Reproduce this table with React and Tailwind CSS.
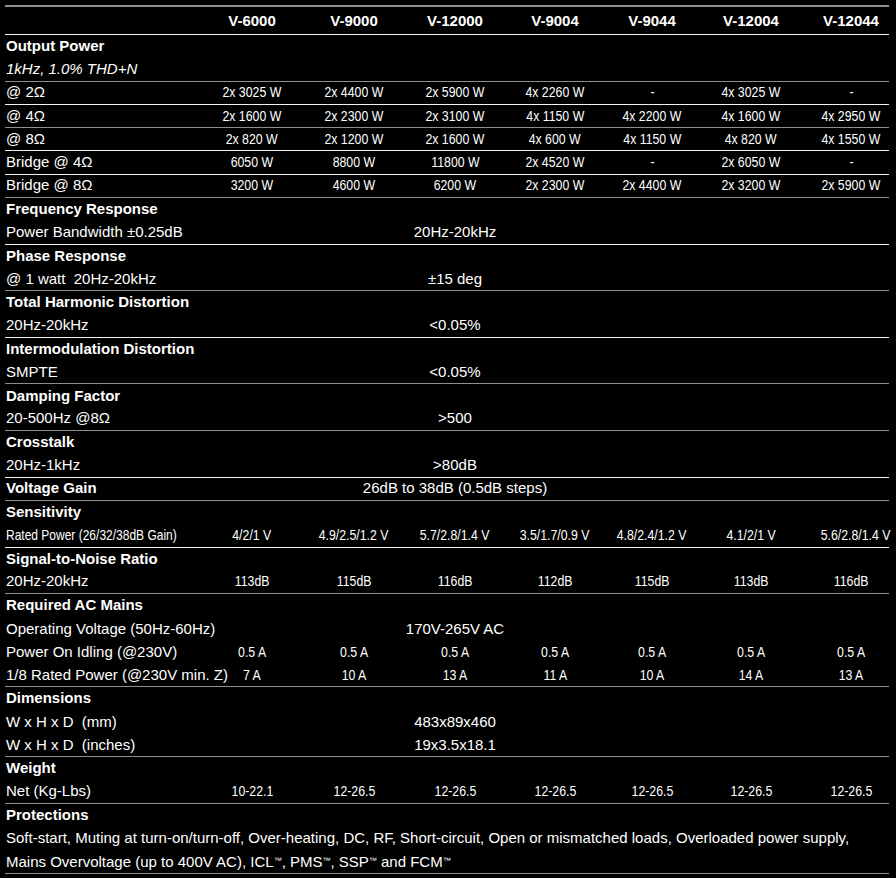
import React from "react";

const COLS = ["V-6000", "V-9000", "V-12000", "V-9004", "V-9044", "V-12004", "V-12044"];

const GRID = "grid grid-cols-[197px_100px_104px_98px_102px_92px_106px_1fr]";
const SANS = { fontFamily: '"Liberation Sans", Arial, sans-serif' };

function lineCls(line) {
  if (line === "white") return "border-b border-[#f2f2f2]";
  if (line === "gray") return "border-b border-[#8f8f8f]";
  return "";
}

function Row({ line, children, className = "" }) {
  return (
    <div className={`${GRID} h-[23.3px] items-center pb-[2px] ${lineCls(line)} ${className}`}>{children}</div>
  );
}

function Label({ children, bold, italic, narrow }) {
  if (narrow) {
    return (
      <div className="pl-[1px] whitespace-pre text-[15px] leading-none text-white">
        <span className="inline-block origin-left scale-x-[0.8]">{children}</span>
      </div>
    );
  }
  return (
    <div
      className={`pl-[1px] whitespace-pre text-[15px] leading-none text-white ${bold ? "font-bold" : ""} ${italic ? "italic" : ""}`}
    >
      {children}
    </div>
  );
}

function Values({ v }) {
  return v.map((x, i) => (
    <div
      key={i}
      className={`flex justify-center whitespace-nowrap text-[15px] leading-none text-white ${i === 6 ? "pl-[9px]" : ""}`}
    >
      <span className="inline-block scale-x-[0.82]">{x}</span>
    </div>
  ));
}

function Span({ children }) {
  return (
    <div className="col-start-4 flex justify-center whitespace-nowrap text-[15px] leading-none text-white">
      {children}
    </div>
  );
}

function Section({ title, children }) {
  return (
    <>
      <Row>
        <Label bold>{title}</Label>
      </Row>
      {children}
    </>
  );
}

export default function App() {
  return (
    <div className="min-h-[878px] bg-black pt-[5px] pl-[5px]" style={SANS}>
      <div className="w-[884px] border-t-2 border-[#8f8f8f]">
        {/* header */}
        <div className={`${GRID} h-[28px] items-center pb-[1px] border-b border-[#f2f2f2]`}>
          <div />
          {COLS.map((c, i) => (
            <div
              key={c}
              className={`flex justify-center text-[15px] font-bold leading-none text-white ${i === 6 ? "pl-[9px]" : ""}`}
            >
              {c}
            </div>
          ))}
        </div>

        <Section title="Output Power">
          <Row line="gray">
            <Label italic>1kHz, 1.0% THD+N</Label>
          </Row>
        </Section>
        <Row line="white">
          <Label>@ 2Ω</Label>
          <Values v={["2x 3025 W", "2x 4400 W", "2x 5900 W", "4x 2260 W", "-", "4x 3025 W", "-"]} />
        </Row>
        <Row line="gray">
          <Label>@ 4Ω</Label>
          <Values v={["2x 1600 W", "2x 2300 W", "2x 3100 W", "4x 1150 W", "4x 2200 W", "4x 1600 W", "4x 2950 W"]} />
        </Row>
        <Row line="white">
          <Label>@ 8Ω</Label>
          <Values v={["2x 820 W", "2x 1200 W", "2x 1600 W", "4x 600 W", "4x 1150 W", "4x 820 W", "4x 1550 W"]} />
        </Row>
        <Row line="white">
          <Label>Bridge @ 4Ω</Label>
          <Values v={["6050 W", "8800 W", "11800 W", "2x 4520 W", "-", "2x 6050 W", "-"]} />
        </Row>
        <Row line="gray">
          <Label>Bridge @ 8Ω</Label>
          <Values v={["3200 W", "4600 W", "6200 W", "2x 2300 W", "2x 4400 W", "2x 3200 W", "2x 5900 W"]} />
        </Row>

        <Section title="Frequency Response">
          <Row line="white">
            <Label>Power Bandwidth ±0.25dB</Label>
            <Span>20Hz-20kHz</Span>
          </Row>
        </Section>
        <Section title="Phase Response">
          <Row line="gray">
            <Label>{"@ 1 watt  20Hz-20kHz"}</Label>
            <Span>±15 deg</Span>
          </Row>
        </Section>
        <Section title="Total Harmonic Distortion">
          <Row line="white">
            <Label>20Hz-20kHz</Label>
            <Span>&lt;0.05%</Span>
          </Row>
        </Section>
        <Section title="Intermodulation Distortion">
          <Row line="gray">
            <Label>SMPTE</Label>
            <Span>&lt;0.05%</Span>
          </Row>
        </Section>
        <Section title="Damping Factor">
          <Row line="gray">
            <Label>20-500Hz @8Ω</Label>
            <Span>&gt;500</Span>
          </Row>
        </Section>
        <Section title="Crosstalk">
          <Row line="white">
            <Label>20Hz-1kHz</Label>
            <Span>&gt;80dB</Span>
          </Row>
        </Section>
        <Row line="gray">
          <Label bold>Voltage Gain</Label>
          <Span>26dB to 38dB (0.5dB steps)</Span>
        </Row>
        <Section title="Sensitivity">
          <Row line="white">
            <Label narrow>Rated Power (26/32/38dB Gain)</Label>
            <Values v={["4/2/1 V", "4.9/2.5/1.2 V", "5.7/2.8/1.4 V", "3.5/1.7/0.9 V", "4.8/2.4/1.2 V", "4.1/2/1 V", "5.6/2.8/1.4 V"]} />
          </Row>
        </Section>
        <Section title="Signal-to-Noise Ratio">
          <Row line="gray">
            <Label>20Hz-20kHz</Label>
            <Values v={["113dB", "115dB", "116dB", "112dB", "115dB", "113dB", "116dB"]} />
          </Row>
        </Section>
        <Section title="Required AC Mains">
          <Row>
            <Label>Operating Voltage (50Hz-60Hz)</Label>
            <Span>170V-265V AC</Span>
          </Row>
          <Row>
            <Label>Power On Idling (@230V)</Label>
            <Values v={["0.5 A", "0.5 A", "0.5 A", "0.5 A", "0.5 A", "0.5 A", "0.5 A"]} />
          </Row>
          <Row line="gray">
            <Label>1/8 Rated Power (@230V min. Z)</Label>
            <Values v={["7 A", "10 A", "13 A", "11 A", "10 A", "14 A", "13 A"]} />
          </Row>
        </Section>
        <Section title="Dimensions">
          <Row>
            <Label>{"W x H x D  (mm)"}</Label>
            <Span>483x89x460</Span>
          </Row>
          <Row line="gray">
            <Label>{"W x H x D  (inches)"}</Label>
            <Span>19x3.5x18.1</Span>
          </Row>
        </Section>
        <Section title="Weight">
          <Row line="gray">
            <Label>Net (Kg-Lbs)</Label>
            <Values v={["10-22.1", "12-26.5", "12-26.5", "12-26.5", "12-26.5", "12-26.5", "12-26.5"]} />
          </Row>
        </Section>
        <Section title="Protections">
          <div className="border-b border-[#8f8f8f]">
            <div className="flex h-[23.3px] items-center pb-[2px] pl-[1px] text-[15px] leading-none text-white whitespace-nowrap">
              Soft-start, Muting at turn-on/turn-off, Over-heating, DC, RF, Short-circuit, Open or mismatched loads, Overloaded power supply,
            </div>
            <div className="flex h-[22.3px] items-center pb-[1px] pl-[1px] text-[15px] leading-none text-white whitespace-nowrap">
              <span>
                Mains Overvoltage (up to 400V AC), ICL<sup className="text-[8px]">™</sup>, PMS<sup className="text-[8px]">™</sup>, SSP
                <sup className="text-[8px]">™</sup> and FCM<sup className="text-[8px]">™</sup>
              </span>
            </div>
          </div>
        </Section>
      </div>
    </div>
  );
}
